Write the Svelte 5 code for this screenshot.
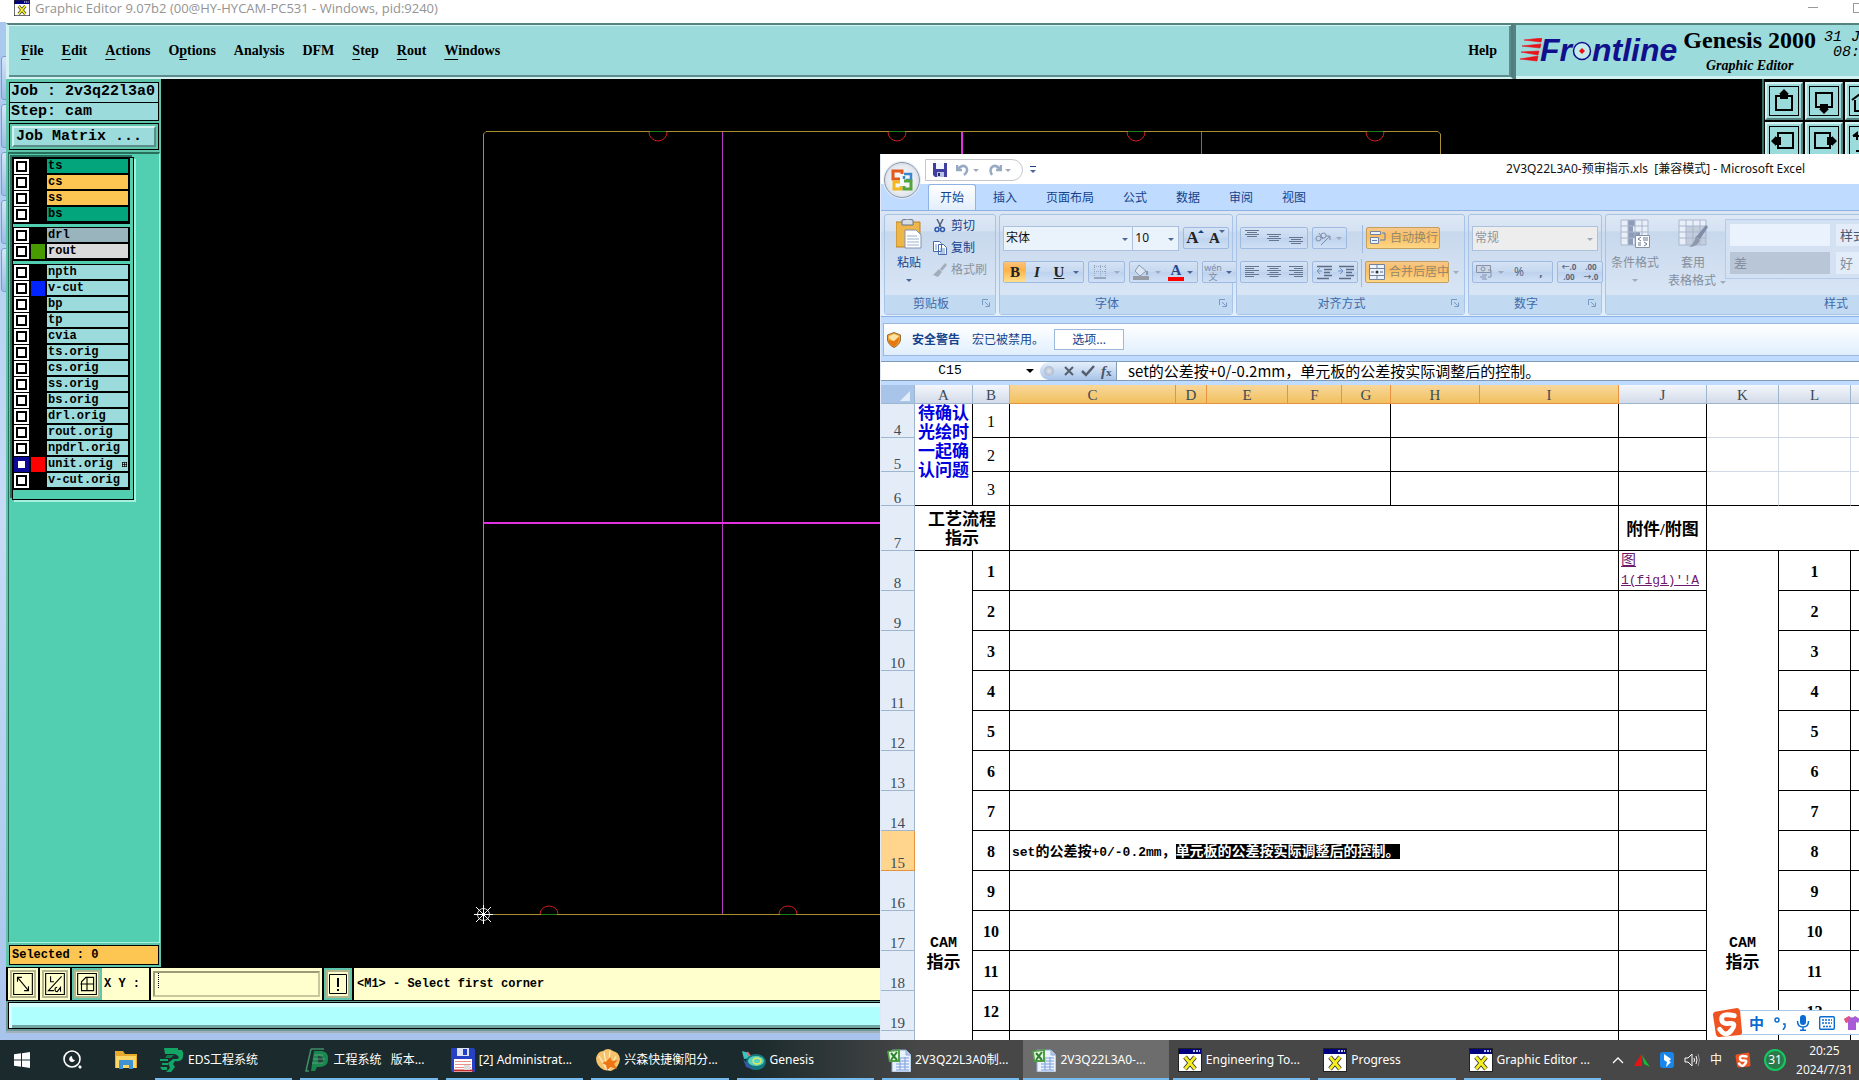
<script lang="ts">
	// Desktop with a CAM graphic editor behind an Excel window, plus the taskbar.

	type Layer = { name: string; bg?: string; swatch?: string; active?: boolean };

	const menus = [
		['', 'F', 'ile'],
		['', 'E', 'dit'],
		['', 'A', 'ctions'],
		['O', 'p', 'tions'],
		['Analysis', '', ''],
		['DFM', '', ''],
		['', 'S', 'tep'],
		['', 'R', 'out'],
		['', 'W', 'indows']
	];

	const layerGroups: Layer[][] = [
		[
			{ name: 'ts', bg: 'green' },
			{ name: 'cs', bg: 'amber' },
			{ name: 'ss', bg: 'amber' },
			{ name: 'bs', bg: 'green' }
		],
		[
			{ name: 'drl', bg: 'slate' },
			{ name: 'rout', bg: 'silver', swatch: '#479a00' }
		],
		[
			{ name: 'npth' },
			{ name: 'v-cut', swatch: '#0024ff' },
			{ name: 'bp' },
			{ name: 'tp' },
			{ name: 'cvia' },
			{ name: 'ts.orig' },
			{ name: 'cs.orig' },
			{ name: 'ss.orig' },
			{ name: 'bs.orig' },
			{ name: 'drl.orig' },
			{ name: 'rout.orig' },
			{ name: 'npdrl.orig' },
			{ name: 'unit.orig', swatch: '#ff0000', active: true },
			{ name: 'v-cut.orig' }
		]
	];

	const tools = ['up', 'down', 'home', 'left', 'right', 'back'];
	const topNotches = [658, 897, 1136, 1375];
	const bottomNotches = [549, 788];

	const tabs = ['开始', '插入', '页面布局', '公式', '数据', '审阅', '视图'];

	const columns = [
		{ id: 'A', width: 58 },
		{ id: 'B', width: 37 },
		{ id: 'C', width: 166, sel: true },
		{ id: 'D', width: 31, sel: true },
		{ id: 'E', width: 81, sel: true },
		{ id: 'F', width: 54, sel: true },
		{ id: 'G', width: 49, sel: true },
		{ id: 'H', width: 89, sel: true },
		{ id: 'I', width: 139, sel: true },
		{ id: 'J', width: 88 },
		{ id: 'K', width: 72 },
		{ id: 'L', width: 72 },
		{ id: 'M', width: 72 }
	];
	const camRows = Array.from({ length: 20 }, (_, i) => i + 1);

	const tasks = [
		{ icon: 'eds', label: 'EDS工程系统' },
		{ icon: 'ps', label: '工程系统   版本...' },
		{ icon: 'disk', label: '[2] Administrat...' },
		{ icon: 'shell', label: '兴森快捷衡阳分...' },
		{ icon: 'genesis', label: 'Genesis' },
		{ icon: 'xls', label: '2V3Q22L3A0制...' },
		{ icon: 'xls', label: '2V3Q22L3A0-...', active: true },
		{ icon: 'x', label: 'Engineering To...' },
		{ icon: 'x', label: 'Progress' },
		{ icon: 'x', label: 'Graphic Editor ...' }
	];

	let command = $state('');
	let formula = $state('set的公差按+0/-0.2mm，单元板的公差按实际调整后的控制。');
</script>

{#snippet xicon()}
	<svg viewBox="0 0 24 24">
		<path d="M0 0H24V24H0Z" fill="#222" />
		<path d="M1 6H23V23H1Z" fill="#fff" />
		<path d="M1 1H23V6H1Z" fill="#000080" />
		<path d="M15 3h2m1 0h2m1 0h1" stroke="#fff" stroke-width="1.5" />
		<path d="M7 9L17 21M17 9L7 21" stroke="#333" stroke-width="4.5" />
		<path d="M7 9L17 21M17 9L7 21" stroke="#f4ee20" stroke-width="2.8" />
	</svg>
{/snippet}

{#snippet lines(widths: number[], align: string, top = 4)}
	<svg viewBox="0 0 22 20" width="22" height="20">
		{#each widths as w, i}
			<path
				d="M{align === 'left' ? 4 : align === 'right' ? 18 - w : 11 - w / 2} {top + i * 2 + 0.5}h{w}"
				stroke="#66758f"
			/>
		{/each}
	</svg>
{/snippet}

{#snippet indent(flip: boolean)}
	<svg viewBox="0 0 22 20" width="22" height="20">
		<path d="M4 4.500h15M11 7.500h8M11 10.500h6M11 13.500h8M4 16.500h12" stroke="#5d6d88" stroke-width="1.500" />
		<path d={flip ? 'M3 9h4M5 6l3 3-3 3' : 'M9 9H4M7 6L4 9l3 3'} stroke="#6f90c4" fill="none" />
	</svg>
{/snippet}

{#snippet launcher()}
	<svg class="launcher" viewBox="0 0 8 8" width="8" height="8">
		<path d="M.5 6V.5H6M3 3l3.500 3.500M7.500 3.500v4h-4" stroke="#7797c4" fill="none" />
	</svg>
{/snippet}

{#snippet sogou()}
	<svg viewBox="0 0 32 32">
		<path d="M3 5L26 1q2 0 3 3l2 22q0 2-2 3L8 31q-3 0-4-3L1 8q0-2 2-3Z" fill="#ee5322" />
		<path
			d="M23 9Q10 6 10 12t8 5 2 7-12-1"
			stroke="#fff"
			stroke-width="5"
			fill="none"
			stroke-linecap="round"
		/>
	</svg>
{/snippet}

{#snippet taskIcon(name: string)}
	{#if name === 'x'}
		{@render xicon()}
	{:else if name === 'eds'}
		<svg viewBox="0 0 24 24">
			<path
				d="M4 0h14v2h4q2 3 1 7-1 5-8 4l-2 3 2 3-4 5H6l4-4-2-5 5-4h4q3-1 1-3-2-2-4-2H5Z M0 11h8v2H0ZM2 15h6v2H2ZM0 19h7v3H2Z"
				fill="#12a565"
			/>
			<path d="M7 7h7l-3 3H5Z" fill="#0b7e4b" />
		</svg>
	{:else if name === 'ps'}
		<svg viewBox="0 0 24 24">
			<path d="M6 1h13M6 1L1 23h3" fill="none" stroke="#3f8f67" stroke-width="1.500" />
			<path d="M9 3h8q7 1 6 9 0 6-8 7h-3l-2 4H6Z" fill="#19884f" />
			<path d="M13 8q5 0 5 4t-5 3Z" fill="#23443a" />
			<path d="M9 7h9M8 11h12M7 15h11" stroke="#70a78a" stroke-width=".8" />
		</svg>
	{:else if name === 'disk'}
		<svg viewBox="0 0 24 24">
			<path d="M1 0H23l1 2V24H1L0 22V1Z" fill="#2741c4" />
			<path d="M6 0H18V8H6Z" fill="#dce3f5" />
			<path d="M12 1h4v6h-4Z" fill="#2741c4" />
			<path d="M3 11H21V24H3Z" fill="#fff" />
			<path d="M4 13.500h16M4 16.500h16M4 19.500h16" stroke="#ee8f8f" />
			<path d="M2 22.500h20" stroke="#c02e2e" stroke-width="2" />
			<path d="M13 17h6v5h-6Z" fill="#ddd" />
		</svg>
	{:else if name === 'shell'}
		<svg viewBox="0 0 24 24">
			<path d="M8 22Q0 18 0 10q2-7 7-7 5-4 10 0 6 1 7 8-1 9-9 12Z" fill="#f6c26a" />
			<path d="M11 22L3 8M11 22L8 4M12 22l2-19M13 22l7-14" stroke="#fff0cf" stroke-width="1.200" />
			<path d="M14 9l2 4 6-1-4 4 3 5-6-2-4 3-1-5-4-2 5-2Z" fill="#ee7414" />
		</svg>
	{:else if name === 'genesis'}
		<svg viewBox="0 0 24 24">
			<path d="M0 3l7 2 2 5-7 1Z" fill="#39c6c0" />
			<ellipse cx="14" cy="14" rx="10" ry="8" fill="#15777c" />
			<ellipse cx="14" cy="13" rx="8" ry="5" fill="#5ad2c1" />
			<ellipse cx="15" cy="13" rx="4" ry="3" fill="none" stroke="#dfe85a" stroke-width="1.500" />
			<path d="M1 11l8 8 4 3-9-3Z" fill="#3557a8" />
			<path d="M5 4l3 4" stroke="#e56a6a" stroke-width="2" />
		</svg>
	{:else}
		<svg viewBox="0 0 24 24">
			<path d="M5 2H19l5 5V24H5Z" fill="#e9f1fc" stroke="#8ea9d2" />
			<path d="M19 2v5h5" fill="#b9cdea" stroke="#8ea9d2" />
			<path d="M14 10h8M14 13h8M9 16h13M9 19h13M9 22h13M13 9v13M18 9v13" stroke="#7c9edb" />
			<path d="M0 3L13 1V14L2 14Z" fill="#4f9f45" />
			<path d="M2 4L11 3V12L3 12Z" fill="#e8f6e2" />
			<path d="M4 5l6 7M10 4l-6 8" stroke="#2c8331" stroke-width="2" />
		</svg>
	{/if}
{/snippet}

<div class="screen">
	<main class="desktop">
		<div class="behind">
			{#each [0, 1, 2, 3, 4] as n (n)}<i></i>{/each}
		</div>

		<section class="genesis">
			<header class="g-title">
				<span class="g-app">{@render xicon()}</span>
				<span class="g-caption">Graphic Editor 9.07b2 (00@HY-HYCAM-PC531 - Windows, pid:9240)</span>
				<button class="win-btn" aria-label="Minimize"><i class="min"></i></button>
				<button class="win-btn" aria-label="Maximize"><i class="max"></i></button>
			</header>

			<div class="g-top">
				<nav class="g-menu">
					{#each menus as [pre, key, post]}
						<button>{pre}<span class="key">{key}</span>{post}</button>
					{/each}
					<button class="help">Help</button>
				</nav>
				<div class="g-brand">
					<div class="logo">
						<svg class="streaks" viewBox="0 0 22 24" width="22" height="24">
							<path
								d="M4 2L22 0l-1 4ZM2 8l19-2-1 4ZM1 14l18-1-1 4ZM0 21l18-3-1 5Z"
								fill="#e8141c"
								stroke="#e8141c"
								stroke-width=".6"
							/>
						</svg>
						<span>Fr</span>
						<svg class="target" viewBox="0 0 20 20" width="20" height="20">
							<circle cx="10" cy="10" r="8.500" fill="#c4ebeb" stroke="#10108c" stroke-width="1.500" />
							<path d="M10 7l3 3-3 3-3-3Z" fill="#ee1111" />
						</svg>
						<span>ntline</span>
					</div>
					<div class="product">
						<strong>Genesis 2000</strong>
						<em>Graphic Editor</em>
					</div>
					<div class="stamp"><span>31 J</span><span>08:</span></div>
				</div>
			</div>

			<div class="g-work">
				<aside class="g-side">
					<div class="job-info">
						<div>Job : 2v3q22l3a0</div>
						<div>Step: cam</div>
					</div>
					<div class="matrix"><button>Job Matrix ...</button></div>
					<div class="side-body">
						<div class="layers">
							{#each layerGroups as group}
								<div class="layer-group">
									{#each group as l (l.name)}
										<label class="layer">
											<input type="checkbox" checked={l.active} />
											<span class="swatch" style:background={l.swatch ?? '#000'}></span>
											<span class="lname {l.bg ?? ''}">
												{l.name}
												{#if l.active}
													<svg viewBox="0 0 5 5" width="5" height="5"><path d="M0 .5h5M0 2.500h5M0 4.500h5M.5 0v5M2.500 0v5M4.500 0v5" stroke="#000" stroke-width=".7" /></svg>
												{/if}
											</span>
										</label>
									{/each}
								</div>
							{/each}
						</div>
					</div>
					<div class="selected"><div>Selected : 0</div></div>
				</aside>

				<div class="g-canvas">
					<svg width="100%" height="100%">
						<g transform="translate(-161 -79)" fill="none">
							<path d="M486 131.500H1438L1440.500 134V914.500H483.500V134Z" stroke="#a8902e" />
							<path d="M722.500 132V914M1201.500 132V914" stroke="#b83cc0" />
							<path d="M962 132V914M484 523H1440" stroke="#e030e0" stroke-width="2" />
							{#each topNotches as x}
								<path d="M{x - 9} 132a9 9 0 0 0 18 0" stroke="#d01c1c" />
								<path d="M{x - 8} 131.500h16" stroke="#1d7a1d" />
							{/each}
							{#each bottomNotches as x}
								<path d="M{x - 9} 914a9 8 0 0 1 18 0" stroke="#d01c1c" />
								<path d="M{x - 8} 914.500h16" stroke="#1d7a1d" />
							{/each}
							<circle cx="483.500" cy="914.500" r="6" stroke="#ddd" />
							<path d="M474 914.500h19M483.500 905v19M476 907l15 15M491 907l-15 15" stroke="#fff" />
						</g>
					</svg>
				</div>

				<div class="g-tools">
					{#each tools as t (t)}
						<button aria-label={t}>
							<svg viewBox="0 0 28 28" width="28" height="28" fill="none" stroke="#000" stroke-width="2">
								{#if t === 'up'}
									<path d="M6 9H22V23H6Z" /><path d="M14 2l5 5h-1v5h-8V7H9Z" fill="#000" stroke="none" />
								{:else if t === 'down'}
									<path d="M6 6H22V20H6Z" /><path d="M14 27l5-5h-1v-5h-8v5H9Z" fill="#000" stroke="none" />
								{:else if t === 'left'}
									<path d="M8 6H23V21H8Z" /><path d="M1 14l5-5v1h5v8H6v1Z" fill="#000" stroke="none" />
								{:else if t === 'right'}
									<path d="M5 6H20V21H5Z" /><path d="M27 14l-5-5v1h-5v8h5v1Z" fill="#000" stroke="none" />
								{:else if t === 'home'}
									<path d="M2 13L14 4l12 9M5 13V24H23V13M10 24V15h6" />
								{:else}
									<path d="M3 9l4-3v7M3 9h8q6 3 3 12M6 24h8" />
								{/if}
							</svg>
						</button>
					{/each}
				</div>
			</div>

			<div class="g-command">
				<button class="cmd" aria-label="Snap"><svg viewBox="0 0 18 20" width="20" height="22" fill="none" stroke="#000"><path d="M.5.5h17v19H.5ZM4 4l10 12M4 8V4h4M14 12v4h-4" /></svg></button>
				<button class="cmd" aria-label="Angle"><svg viewBox="0 0 18 20" width="20" height="22" fill="none" stroke="#000"><path d="M.5.5h17v19H.5ZM15 3L3 16h5M5 3v5h3M11 13a2 2 0 1 0 0 4l3-4v4" /></svg></button>
				<button class="cmd on" aria-label="Grid"><svg viewBox="0 0 18 20" width="20" height="22" fill="none" stroke="#000"><path d="M.5.5h17v19H.5ZM4 16V8l4-4h7v12ZM9 4v12M3 10h12" /></svg></button>
				<label for="xy">X Y :</label>
				<div class="xy"><input id="xy" bind:value={command} /><span class="caret"></span></div>
				<button class="cmd on alert" aria-label="Alert"><svg viewBox="0 0 18 20" width="18" height="22" fill="none" stroke="#000"><path d="M.5.5h17v19H.5Z" /><path d="M9 4v9M9 15v2" stroke-width="2" /></svg></button>
				<output>&lt;M1&gt; - Select first corner</output>
			</div>
			<div class="g-status"><div></div></div>
		</section>

		<section class="excel">
			<header class="x-title">
				<div class="qat">
					<button aria-label="保存"><svg viewBox="0 0 14 14" width="14" height="14"><path d="M0 0H14V14H2L0 12Z" fill="#3f3fa0" /><path d="M3 0h8v6H3Z" fill="#f4f7ff" /><path d="M4 9h7v5H4Z" fill="#b9c2e4" /><path d="M5 10h2v3H5Z" fill="#222a66" /></svg></button>
					<button aria-label="撤消"><svg viewBox="0 0 14 14" width="14" height="14"><path d="M1 2v5h5M2 6q4-5 8-2 3 4-2 8" fill="none" stroke="#98a9c4" stroke-width="2.500" /></svg><i class="tri pale"></i></button>
					<button aria-label="恢复"><svg viewBox="0 0 14 14" width="14" height="14"><path d="M13 2v5H8M12 6Q8 1 4 4 1 7 4 12" fill="none" stroke="#98a9c4" stroke-width="2.500" /></svg><i class="tri pale"></i></button>
				</div>
				<button class="more" aria-label="自定义"><i class="tri"></i></button>
				<h1>2V3Q22L3A0-预审指示.xls  [兼容模式] - Microsoft Excel</h1>
			</header>
			<button class="orb" aria-label="Office">
				<svg viewBox="0 0 24 24" width="24" height="24" fill="none" stroke-width="3">
					<path d="M10 11H3V3h9v3" stroke="#e2591c" />
					<path d="M14 6h7v6h-5M14 8v3" stroke="#3b86d0" stroke-width="2.500" />
					<path d="M10 14H4v7h7v-3" stroke="#f4b81d" />
					<path d="M14 13h7v8h-7v-3" stroke="#55a53c" />
				</svg>
			</button>

			<nav class="x-tabs">
				{#each tabs as t, i (t)}
					<button class:current={i === 0}>{t}</button>
				{/each}
			</nav>

			<div class="ribbon">
				<div class="group clip">
					<div class="body">
						<button class="big paste">
							<svg viewBox="0 0 26 30" width="26" height="30">
								<path d="M0 3H24V28H0Z" fill="#eeb549" stroke="#b98225" />
								<path d="M6 1q6-2 11 0v5H6Z" fill="#d7dde6" stroke="#68758a" />
								<path d="M9 11h11l5 5v13H9Z" fill="#fff" stroke="#7d93b9" />
								<path d="M11 17h10M11 20h12M11 23h12M11 26h12" stroke="#9bb0d2" />
							</svg>
							<span>粘贴</span><i class="tri"></i>
						</button>
						<div class="clip-list">
							<button><svg viewBox="0 0 14 14" width="14" height="14" fill="none"><path d="M4 0l4 8M10 0L6 8" stroke="#55607a" stroke-width="1.500" /><circle cx="4" cy="10.500" r="2" stroke="#2f57a8" stroke-width="1.500" /><circle cx="9.500" cy="10.500" r="2" stroke="#2f57a8" stroke-width="1.500" /></svg>剪切</button>
							<button><svg viewBox="0 0 14 14" width="14" height="14"><path d="M.5.5h6l2 2v8h-8ZM5.500 3.500h5l3 3v7h-8Z" fill="#fff" stroke="#4569a9" /><path d="M7 8h5M7 10h5M7 12h5M2 4h2M2 6h2M2 8h2" stroke="#6b90d0" /></svg>复制</button>
							<button class="off"><svg viewBox="0 0 14 14" width="14" height="14"><path d="M12 0l2 2-5 6-2-2ZM6 6l3 3-4 5-5-2Z" fill="#a3acb9" /></svg>格式刷</button>
						</div>
					</div>
					<footer>剪贴板{@render launcher()}</footer>
				</div>

				<div class="group font">
					<div class="body rows">
						<div class="row">
							<div class="combo family"><select aria-label="字体"><option>宋体</option></select><i class="tri"></i></div>
							<div class="combo size"><select aria-label="字号"><option>10</option></select><i class="tri"></i></div>
							<div class="seg push"><button class="serif big-a" aria-label="增大字号">A<i class="tri up"></i></button><button class="serif small-a" aria-label="减小字号">A<i class="tri dn"></i></button></div>
						</div>
						<div class="row">
							<div class="seg"><button class="serif pressed">B</button><button class="serif it">I</button><button class="serif un">U</button><i class="tri"></i></div>
							<div class="seg"><button aria-label="边框"><svg viewBox="0 0 14 14" width="14" height="14"><path d="M1.500 0v12M7.500 0v12M12.500 0v12M1 1.500h12M1 6.500h12" stroke="#97a7bf" stroke-dasharray="1 1" /><path d="M1 13h12" stroke="#66758f" /></svg></button><i class="tri pale"></i></div>
							<div class="seg"><button aria-label="填充颜色"><svg viewBox="0 0 16 16" width="16" height="16"><path d="M6 1l7 6-6 5-5-5Z" fill="#dce6f3" stroke="#8898b0" /><path d="M14 7v4" stroke="#8898b0" stroke-width="2" /><path d="M0 12h16v4H0Z" fill="#969ca5" /></svg></button><i class="tri pale"></i><button class="serif red">A</button><i class="tri"></i></div>
							<div class="seg"><button class="wen" aria-label="拼音"><span>wén</span><span>文</span></button><i class="tri"></i></div>
						</div>
					</div>
					<footer>字体{@render launcher()}</footer>
				</div>

				<div class="group align">
					<div class="body rows">
						<div class="row">
							<div class="seg"><button aria-label="顶端对齐">{@render lines([14, 10, 14, 10], 'center', 2)}</button><button aria-label="垂直居中">{@render lines([14, 10, 14, 10], 'center', 6)}</button><button aria-label="底端对齐">{@render lines([14, 10, 14, 10], 'center', 9)}</button></div>
							<div class="seg"><button class="slant" aria-label="方向"><svg viewBox="0 0 18 18" width="18" height="18" fill="none" stroke="#7d8ca6"><circle cx="4.500" cy="9.500" r="2.500" /><path d="M5 4l4 6" /><circle cx="9.500" cy="6.500" r="2.500" /><path d="M7 16L16 7M16 11V7h-4" /></svg></button><i class="tri pale"></i></div>
							<button class="hot wrap"><svg viewBox="0 0 16 16" width="16" height="16"><path d="M.5 1.500h10v3H.5ZM.5 7.500h8v6H.5Z" fill="#eef3fb" stroke="#72839d" /><path d="M12 3h3v7h-5M2 10.500h5" stroke="#5b7ab0" fill="none" /></svg>自动换行</button>
						</div>
						<div class="row">
							<div class="seg"><button aria-label="左对齐">{@render lines([14, 9, 14, 9, 14, 9], 'left')}</button><button aria-label="居中">{@render lines([14, 9, 14, 9, 14, 9], 'center')}</button><button aria-label="右对齐">{@render lines([14, 9, 14, 9, 14, 9], 'right')}</button></div>
							<div class="seg"><button aria-label="减少缩进">{@render indent(false)}</button><button aria-label="增加缩进">{@render indent(true)}</button></div>
							<button class="hot merge"><svg viewBox="0 0 16 16" width="16" height="16"><path d="M.5.500h15v15H.5ZM.5 4.500h15M.5 11.500h15M8 0v4M8 12v4" fill="#eef3fb" stroke="#72839d" /><path d="M2 8h3M14 8h-3" stroke="#3f68ad" /><circle cx="8" cy="8" r="1.500" fill="#333" /></svg>合并后居中</button><i class="tri pale"></i>
						</div>
					</div>
					<footer>对齐方式{@render launcher()}</footer>
				</div>

				<div class="group number">
					<div class="body rows">
						<div class="row">
							<div class="combo general"><select aria-label="数字格式" disabled><option>常规</option></select><i class="tri pale"></i></div>
						</div>
						<div class="row">
							<div class="seg"><button aria-label="货币"><svg viewBox="0 0 16 16" width="16" height="16" fill="none" stroke="#8592a8"><path d="M.5 1.500h14v7H.5Z" fill="#cdd6e3" /><circle cx="7" cy="5" r="2" /><path d="M12 6h3v7h-3M6 11h5M4 13h6M6 15h5" /></svg></button><i class="tri pale"></i><button>%</button><button class="comma">,</button></div>
							<div class="seg push dec"><button><span>←.0</span><span>.00</span></button><button><span>.00</span><span>→.0</span></button></div>
						</div>
					</div>
					<footer>数字{@render launcher()}</footer>
				</div>

				<div class="group styles">
					<div class="body">
						<button class="big cond">
							<svg viewBox="0 0 30 30" width="30" height="30"><path d="M1 1H28V26H1Z" fill="#e9eff8" /><path d="M8 1h7v6H8ZM8 13h12v6H8ZM8 7h5v6H8ZM8 19h5v7H8Z" fill="#8d9cb8" /><path d="M1 1H28V26H1ZM8 1v25M15 1v25M22 1v25M1 7h27M1 13h27M1 19h27" stroke="#a9b7cd" fill="none" /><path d="M15.500 16.500h14v12h-14Z" fill="#fff" stroke="#8592a8" /><path d="M21 18l-3 2 3 2M18 24h3M18 26h3M23 19h5M23 21h5M24 23l3 2-3 2" stroke="#66758f" fill="none" /></svg>
							<span>条件格式</span><i class="tri pale"></i>
						</button>
						<button class="big tablefmt">
							<svg viewBox="0 0 30 30" width="30" height="30"><path d="M1 1H28V26H1Z" fill="#e9eff8" /><path d="M8 7h20v19H8Z" fill="#c3cddc" /><path d="M1 1H28V26H1ZM8 1v25M15 1v25M22 1v25M1 7h27M1 13h27M1 19h27" stroke="#a9b7cd" fill="none" /><path d="M28 6l2 2-8 12-4-2Z" fill="#7f8ea8" /><path d="M18 17l4 4q-2 7-11 7 5-3 7-11Z" fill="#8e99ac" /></svg>
							<span>套用</span><span>表格格式<i class="tri pale"></i></span>
						</button>
						<div class="gallery">
							<button class="plain" aria-label="样式预览"></button><button class="side">样式</button>
							<button class="bad">差</button><button class="side off">好</button>
						</div>
					</div>
					<footer>样式</footer>
				</div>
			</div>

			<div class="security">
				<svg viewBox="0 0 14 16" width="14" height="16"><path d="M7 .5L13.500 3v5q-1 5-6.500 7.500Q1.500 13 .5 8V3Z" fill="#f7a228" stroke="#8d6d39" /><path d="M7 2l5 2-5 6-5-4V4Z" fill="#fde2a6" /><path d="M7 15Q2 12 1 8l6 1 5-4v3q-1 4-5 7Z" fill="#e87810" /></svg>
				<strong>安全警告</strong>
				<span>宏已被禁用。</span>
				<button>选项...</button>
			</div>

			<div class="formula">
				<div class="namebox"><input aria-label="名称框" value="C15" /><i class="tri"></i></div>
				<div class="fx">
					<i class="knob"></i>
					<button aria-label="取消"><svg viewBox="0 0 12 12" width="12" height="12"><path d="M2 2l8 8M10 2l-8 8" stroke="#555e6c" stroke-width="2" /></svg></button>
					<button aria-label="输入"><svg viewBox="0 0 14 12" width="14" height="12"><path d="M1 6l4 4 8-9" stroke="#555e6c" stroke-width="2.500" fill="none" /></svg></button>
					<button class="fn"><em>f</em><small>x</small></button>
				</div>
				<input class="fx-text" aria-label="编辑栏" bind:value={formula} />
			</div>

			<div class="sheet">
				<table>
					<colgroup>
						<col class="hcol" />
						{#each columns as c (c.id)}<col style:width="{c.width}px" />{/each}
					</colgroup>
					<thead>
						<tr>
							<th class="corner" aria-label="全选"><i></i></th>
							{#each columns as c (c.id)}<th class:sel={c.sel}>{c.id}</th>{/each}
						</tr>
					</thead>
					<tbody>
						{#each [4, 5, 6] as r (r)}
							<tr class={r === 4 ? 'first' : 'note'}>
								<th>{r}</th>
								{#if r === 4}<td rowspan="3" class="pending">待确认光绘时一起确认问题</td>{/if}
								<td class="num">{r - 3}</td>
								<td colspan="5"></td>
								<td colspan="2"></td>
								<td></td>
								<td class="faint" class:edge={r === 6}></td>
								<td class="faint" class:edge={r === 6}></td>
								<td class="faint" class:edge={r === 6}></td>
							</tr>
						{/each}
						<tr class="flow">
							<th>7</th>
							<td colspan="2" class="head">工艺流程<br />指示</td>
							<td colspan="7"></td>
							<td class="head">附件/附图</td>
							<td colspan="3"></td>
						</tr>
						{#each camRows as n (n)}
							<tr class:editing={n === 8}>
								<th>{n + 7}</th>
								{#if n === 1}<td rowspan="20" class="head"><span class="cam">CAM</span><br />指示</td>{/if}
								<td class="num bold">{n}</td>
								<td colspan="7" class="text">
									{#if n === 8}<span class="latin">set</span>的公差按<span class="latin">+0/-0.2mm</span>，<mark>单元板的公差按实际调整后的控制。</mark>{/if}
								</td>
								<td class="link">{#if n === 1}<a href="#fig1">图<br /><span class="latin">1(fig1)'!A</span></a>{/if}</td>
								{#if n === 1}<td rowspan="20" class="head"><span class="cam">CAM</span><br />指示</td>{/if}
								<td class="num bold">{n}</td>
								<td></td>
							</tr>
						{/each}
					</tbody>
				</table>
			</div>
		</section>

		<div class="ime">
			<span class="ime-logo">{@render sogou()}</span>
			<div class="ime-bar">
				<b>中</b>
				<svg viewBox="0 0 14 14" width="14" height="14"><circle cx="4" cy="4" r="2" fill="none" stroke="#0a6cd0" stroke-width="1.500" /><path d="M10 8h2v3l-2 3" stroke="#0a6cd0" stroke-width="1.500" fill="none" /></svg>
				<svg viewBox="0 0 14 16" width="14" height="16"><rect x="4" y="0" width="6" height="10" rx="3" fill="#0a6cd0" /><path d="M1.500 6q0 6 5.500 6t5.500-6M7 12v3M4 15.200h6" stroke="#0a6cd0" stroke-width="1.500" fill="none" /></svg>
				<svg viewBox="0 0 16 14" width="16" height="14"><rect x=".7" y=".7" width="14.600" height="12.600" rx="1" fill="none" stroke="#0a6cd0" stroke-width="1.400" /><path d="M3 4h10M3 7h10M4 10.500h8" stroke="#0a6cd0" stroke-width="1.600" stroke-dasharray="2 1" /></svg>
				<svg viewBox="0 0 16 14" width="16" height="14"><path d="M5 0q3 3 6 0l5 3-2 4-2-1v8H4V6L2 7 0 3Z" fill="#a85cd8" /><path d="M5 0L0 3l2 4 2-1Z" fill="#ee5570" /></svg>
			</div>
		</div>
	</main>

	<footer class="taskbar">
		<div class="pins">
			<button aria-label="开始菜单"><svg viewBox="0 0 16 16" width="16" height="16" fill="#fff"><path d="M0 2.300l7-1v6.200H0ZM8 1.200L16 0v7.500H8ZM0 8.500h7v6.200l-7-1ZM8 8.500h8V16l-8-1.200Z" /></svg></button>
			<button aria-label="搜索"><svg viewBox="0 0 20 20" width="20" height="20" fill="none" stroke="#fff"><circle cx="9" cy="9" r="8" stroke-width="1.600" /><path d="M9 6a3 3 0 1 0 3 4q-3 0-3-4Z" fill="#fff" stroke="none" /><path d="M16 16l2 2" stroke-width="2.500" /></svg></button>
			<button aria-label="文件资源管理器"><svg viewBox="0 0 22 20" width="22" height="20"><path d="M0 1h8l2 3h12v14H0Z" fill="#e8a92c" /><path d="M1 6h20v12H1Z" fill="#fbd768" /><path d="M4 19v-8q0-1 1-1h12q1 0 1 1v8h-4v-4H8v4Z" fill="#3f93d4" /></svg></button>
		</div>
		<div class="tasks">
			{#each tasks as t}
				<button class:active={t.active}>{@render taskIcon(t.icon)}<span>{t.label}</span></button>
			{/each}
		</div>
		<div class="tray">
			<svg viewBox="0 0 12 12" width="12" height="12"><path d="M1 9l5-5 5 5" stroke="#fff" stroke-width="1.300" fill="none" /></svg>
			<svg viewBox="0 0 16 14" width="16" height="14"><path d="M8 0v13H0Z" fill="#e81212" /><path d="M8 2l8 12-6-3Z" fill="#18b830" /></svg>
			<svg viewBox="0 0 14 16" width="14" height="16"><rect width="14" height="16" rx="3" fill="#1787ee" /><path d="M4 2l7 5-2 2 2 1-5 5 1-5-3-2Z" fill="#fff" /></svg>
			<svg viewBox="0 0 16 14" width="16" height="14" fill="none" stroke="#fff"><path d="M1 5h3l4-4v12L4 9H1ZM10 5q1 2 0 4M12 3q2 4 0 8" /><path d="M14 1q3 6 0 12" stroke="#999" /></svg>
			<span class="lang">中</span>
			<span class="tray-sogou">{@render sogou()}</span>
			<span class="badge">31</span>
			<time><span>20:25</span><span>2024/7/31</span></time>
		</div>
	</footer>
</div>

<style>
	:global(body) {
		margin: 0;
	}
	.screen,
	.screen * {
		box-sizing: border-box;
	}
	.screen {
		display: flex;
		flex-direction: column;
		height: 100vh;
		overflow: hidden;
		font-family: 'Noto Sans', 'Noto Sans CJK SC', sans-serif;
		font-size: 12px;
		line-height: 16px;
	}
	button,
	input,
	select {
		font: inherit;
		color: inherit;
		padding: 0;
		margin: 0;
		border: 0;
		background: none;
		border-radius: 0;
	}
	input:focus {
		outline: none;
	}
	svg {
		display: block;
		flex: none;
	}
	.desktop {
		position: relative;
		flex: 1;
		min-height: 0;
		overflow: hidden;
		background: linear-gradient(#fff 22px, #a9c8ee 22px, #c7dbf6 50%, #a9c4ec);
	}
	.behind {
		display: flex;
		flex-direction: column;
		gap: 4px;
		width: 12px;
		padding: 56px 0 0 1px;
	}
	.behind i {
		height: 44px;
		border: 1px solid #7d9cc9;
		border-radius: 3px;
		background: linear-gradient(#d5e4f8, #9dbbe5);
	}

	/* graphic editor window */
	.genesis {
		position: absolute;
		inset: 0 0 7px 6px;
		display: flex;
		flex-direction: column;
		background: #000;
	}
	.g-title {
		display: flex;
		align-items: center;
		height: 23px;
		padding: 0 0 8px 8px;
		background: #fff;
		color: #949494;
		overflow: hidden;
	}
	.g-app {
		width: 16px;
		margin-right: 5px;
	}
	.g-caption {
		flex: 1;
		font: 13px/16px 'Open Sans', sans-serif;
	}
	.win-btn {
		display: grid;
		place-items: center;
		width: 45px;
		height: 15px;
	}
	.win-btn:last-child {
		margin-right: -21px;
	}
	.win-btn i {
		display: block;
		width: 10px;
		height: 10px;
		border: 1px solid #999;
	}
	.win-btn .min {
		height: 0;
		border-width: 1px 0 0;
	}
	.g-top {
		display: flex;
		height: 56px;
		background: #9cdbdb;
	}
	.g-menu {
		flex: 1;
		display: flex;
		align-items: center;
		gap: 18px;
		padding: 0 14px 0 13px;
		border: 2px solid;
		border-color: #55817f #4f7d7c #d3f3f3 #d3f3f3;
		box-shadow: inset 1px 1px #d3f3f3, inset -2px -2px #5c8d8c;
		font: bold 14px/16px 'Liberation Serif', serif;
	}
	.key {
		text-decoration: underline;
		text-underline-offset: 4px;
	}
	.help {
		margin-left: auto;
	}
	.g-brand {
		display: flex;
		width: 346px;
		padding: 5px 0 0 4px;
		border: solid #55817f;
		border-width: 2px 0 0 3px;
		box-shadow: inset 0 -3px #d3f3f3;
		overflow: hidden;
	}
	.logo {
		display: flex;
		align-items: center;
		height: 40px;
		font: italic bold 32px/40px 'Liberation Sans', sans-serif;
		color: #10108c;
	}
	.streaks {
		margin-right: -2px;
	}
	.target {
		margin-top: 2px;
	}
	.product {
		display: flex;
		flex-direction: column;
		align-items: center;
		margin-left: 6px;
		font-family: 'Liberation Serif', serif;
	}
	.product strong {
		font-size: 24px;
		line-height: 20px;
		white-space: nowrap;
	}
	.product em {
		margin-top: 6px;
		font-size: 14px;
		font-weight: bold;
		line-height: 20px;
	}
	.stamp {
		display: flex;
		flex-direction: column;
		align-items: flex-end;
		margin-left: 8px;
		font: italic 15px/15px 'Liberation Mono', monospace;
		white-space: nowrap;
	}
	.g-work {
		flex: 1;
		min-height: 0;
		display: flex;
	}
	.g-side {
		display: flex;
		flex-direction: column;
		width: 155px;
		padding: 3px 2px 2px 3px;
		background: #5fc5ab;
		font: bold 15px/18px 'Liberation Mono', monospace;
	}
	.job-info {
		border: 1px solid #000;
		background: #9cdbdb;
	}
	.job-info div {
		height: 19px;
		padding-left: 1px;
		white-space: nowrap;
	}
	.job-info div + div {
		border-top: 1px solid #000;
		height: 18px;
	}
	.matrix {
		margin-top: 2px;
		padding: 2px;
		border: 1px solid #000;
	}
	.matrix button {
		display: block;
		width: 100%;
		height: 21px;
		padding-left: 2px;
		text-align: left;
		background: #9cdbdb;
		border: 2px solid;
		border-color: #d3f3f3 #5c8d8c #5c8d8c #d3f3f3;
	}
	.side-body {
		flex: 1;
		margin: 2px -1px 2px -1px;
		padding: 3px;
		background: #52cfb0;
		border: solid #276e5b;
		border-width: 2px 0 0 1px;
		border-right: 1px solid #a6f0dd;
		border-bottom: 1px solid #a6f0dd;
	}
	.layers {
		display: flex;
		flex-direction: column;
		gap: 3px;
		width: 122px;
		padding: 0 3px 9px 0;
		border: 1px solid #000;
		box-shadow: 2px 2px #a6f0dd, -2px -2px #276e5b;
		font-size: 12px;
		line-height: 14px;
	}
	.layer-group {
		padding: 0 2px 2px 1px;
		background: #000;
	}
	.layer {
		display: flex;
		gap: 2px;
		height: 16px;
		padding-top: 1px;
	}
	.layer input {
		appearance: none;
		width: 15px;
		height: 15px;
		border: 2px solid #fff;
		box-shadow: inset 0 0 0 2px #000;
		background: #fff;
	}
	.layer input:checked {
		border: 4px solid #0a0a96;
		box-shadow: none;
	}
	.swatch {
		width: 14px;
		height: 15px;
	}
	.lname {
		flex: 1;
		display: flex;
		align-items: center;
		justify-content: space-between;
		height: 14px;
		padding: 0 1px;
		background: #9cdbdb;
	}
	.green {
		background: #03a57c;
	}
	.amber {
		background: #fdc551;
	}
	.slate {
		background: #9ab4be;
	}
	.silver {
		background: #dadada;
	}
	.selected div {
		height: 20px;
		padding-left: 2px;
		border: 1px solid #000;
		background: #fdc551;
		font-size: 12px;
	}
	.g-canvas {
		flex: 1;
		min-width: 0;
		overflow: hidden;
	}
	.g-tools {
		display: grid;
		grid-template-columns: repeat(3, 38px);
		grid-auto-rows: 38px;
		gap: 2px;
		width: 97px;
		padding: 3px 0 0 1px;
		overflow: hidden;
		border-left: 2px solid #2f6f62;
	}
	.g-tools button {
		display: grid;
		place-items: center;
		background: #9cdbdb;
		border: 2px solid;
		border-color: #d3f3f3 #55817f #55817f #d3f3f3;
		outline: 1px solid #000;
		outline-offset: -5px;
	}
	.g-command {
		display: flex;
		gap: 2px;
		height: 34px;
		padding: 1px 0 1px 2px;
		background: #000;
		font: bold 12px/16px 'Liberation Mono', monospace;
	}
	.cmd {
		display: grid;
		place-items: center;
		width: 30px;
		background: #ffffce;
		border: 2px solid #ffffce;
		box-shadow: inset 0 0 0 2px #b5b58e;
	}
	.cmd.on {
		border-color: #5fc5ab;
	}
	.cmd.alert {
		width: 28px;
	}
	.g-command label {
		width: 47px;
		margin-left: -2px;
		padding: 8px 0 0 2px;
		background: #ffffce;
		white-space: nowrap;
	}
	.xy {
		position: relative;
		width: 171px;
		padding: 3px 2px;
		background: #ffffce;
	}
	.xy input {
		width: 100%;
		height: 100%;
		padding-left: 4px;
		border: 2px solid;
		border-color: #9b9b78 #c8c8a0 #c8c8a0 #9b9b78;
	}
	.caret {
		position: absolute;
		left: 7px;
		top: 5px;
		height: 15px;
		border-left: 1px dotted #000;
	}
	.g-command output {
		flex: 1;
		padding: 8px 3px;
		background: #ffffce;
	}
	.g-status {
		height: 32px;
		padding: 1px 0 2px 2px;
		background: #6a9a98;
		border-bottom: 2px solid #9fb0b8;
	}
	.g-status div {
		height: 27px;
		border: solid #000;
		border-width: 1px 0 1px 1px;
		background: #b0ffff;
		box-shadow: inset 3px 4px #d5ffff, inset 0 -3px #74a5a5;
	}

	/* excel window */
	.excel {
		position: absolute;
		inset: 154px 0 0 880px;
		display: flex;
		flex-direction: column;
		overflow: hidden;
		background: #bfdbff;
		border-left: 1px solid #dfe9f5;
		color: #15428b;
	}
	.x-title {
		display: flex;
		align-items: center;
		height: 30px;
		padding: 0 54px 0 44px;
		background: #fff;
		flex: none;
	}
	.x-title h1 {
		margin: 0 0 0 auto;
		font-size: 12px;
		font-weight: normal;
		color: #111;
		white-space: pre;
	}
	.qat {
		display: flex;
		align-items: center;
		gap: 9px;
		width: 98px;
		height: 22px;
		margin-top: 2px;
		padding-left: 7px;
		border: 1px solid #c3c7cc;
		border-radius: 0 11px 11px 0;
	}
	.qat button {
		display: flex;
		align-items: center;
		gap: 3px;
	}
	.tri {
		display: block;
		flex: none;
		width: 0;
		border: solid transparent;
		border-width: 3px 3px 0;
		border-top-color: #4a6795;
	}
	.tri.pale {
		border-top-color: #a0aab8;
	}
	.more {
		margin-left: 7px;
		padding-top: 3px;
		border-top: 1px solid #15428b;
	}
	.orb {
		position: absolute;
		left: 3px;
		top: 8px;
		display: grid;
		place-items: center;
		width: 36px;
		height: 36px;
		border: 1px solid #8d99ab;
		border-radius: 50%;
		background: radial-gradient(#fff, #e6e9ef 60%, #b9c3d3);
		box-shadow: 0 0 0 1px #e7edf5;
	}
	.x-tabs {
		display: flex;
		flex: none;
		height: 26px;
		padding-left: 47px;
		gap: 5px;
	}
	.x-tabs button {
		height: 26px;
		padding: 1px 12px 0;
	}
	.x-tabs .current {
		border: solid #8db2e3;
		border-width: 1px 1px 0;
		border-radius: 3px 3px 0 0;
		background: linear-gradient(#fff, #e2eefb);
		padding: 0 11px;
	}
	.ribbon {
		display: flex;
		gap: 3px;
		flex: none;
		width: max-content;
		min-width: 100%;
		padding: 3px 3px 1px;
		border: solid #8db2e3;
		border-width: 1px 0;
		background: linear-gradient(#dbe6f4, #d0dff2 20%, #c9daf0 20%, #e3f0fc);
	}
	.group {
		display: flex;
		flex-direction: column;
		height: 101px;
		border: 1px solid #a9c3e6;
		border-radius: 3px;
		background: linear-gradient(#dee8f5, #d5e2f2 16%, #c8d8ec 17%, #dce9f8);
	}
	.group footer {
		position: relative;
		height: 19px;
		padding-right: 18px;
		background: #c1d9f1;
		color: #3e6aaa;
		text-align: center;
		line-height: 18px;
	}
	.group.styles footer {
		padding: 0;
	}
	.launcher {
		position: absolute;
		right: 5px;
		top: 4px;
	}
	.body {
		flex: 1;
		display: flex;
	}
	.rows {
		flex-direction: column;
		gap: 10px;
		padding: 11px 3px 0;
	}
	.row {
		display: flex;
		align-items: center;
		gap: 4px;
		height: 24px;
	}
	.clip {
		width: 112px;
	}
	.font {
		width: 234px;
	}
	.align {
		width: 229px;
	}
	.number {
		width: 134px;
	}
	.styles {
		width: 462px;
	}
	.big {
		display: flex;
		flex-direction: column;
		align-items: center;
		padding-top: 4px;
		white-space: nowrap;
	}
	.big span {
		margin-top: 6px;
	}
	.big .tri {
		margin-top: 8px;
	}
	.paste {
		width: 48px;
	}
	.clip-list {
		display: flex;
		flex-direction: column;
		gap: 6px;
		padding-top: 3px;
	}
	.clip-list button {
		display: flex;
		align-items: center;
		gap: 4px;
		white-space: nowrap;
	}
	.off {
		color: #8d949e;
	}
	.combo {
		position: relative;
		height: 25px;
		border: 1px solid #abc1de;
		background: #eaf2fb;
		color: #111;
	}
	.combo select {
		appearance: none;
		width: 100%;
		height: 100%;
		padding-left: 2px;
		opacity: 1;
	}
	.combo .tri {
		position: absolute;
		right: 4px;
		top: 11px;
	}
	.combo.family {
		width: 131px;
	}
	.combo.size {
		width: 47px;
		margin-left: -5px;
	}
	.combo.general {
		width: 128px;
		background: #ededed;
		color: #8d949e;
	}
	.seg {
		display: flex;
		align-items: center;
		height: 22px;
		border: 1px solid #9ebae1;
		border-radius: 2px;
		background: linear-gradient(#d5e3f4, #c5d8f0 50%, #bdd2ee 50%, #cfe0f5);
		color: #5a6880;
	}
	.seg button {
		display: grid;
		place-items: center;
		width: 22px;
		height: 20px;
	}
	.seg .tri {
		margin: 0 4px 0 3px;
	}
	.push {
		margin-left: auto;
	}
	.serif {
		font: bold 15px/18px 'Liberation Serif', serif;
		color: #222;
	}
	.big-a {
		font-size: 17px;
	}
	.seg .big-a,
	.seg .small-a {
		display: flex;
		justify-content: center;
	}
	.seg .tri.up,
	.seg .tri.dn {
		align-self: flex-start;
		margin: 2px 0 0 -1px;
		border-width: 3px 3px 0;
	}
	.seg .tri.up {
		border-width: 0 3px 3px;
		border-color: transparent transparent #15428b;
	}
	.it {
		font-style: italic;
	}
	.un {
		text-decoration: underline;
	}
	.seg .red {
		height: 18px;
		width: 16px;
		margin-left: 3px;
		border-bottom: 4px solid #f00;
		color: #29488c;
		line-height: 14px;
	}
	.pressed {
		background: linear-gradient(#fbc37c, #fdb247 40%, #ffe08c);
	}
	.seg .wen {
		display: flex;
		flex-direction: column;
		align-items: center;
		justify-content: center;
		width: 20px;
		font-size: 9px;
		line-height: 9px;
		color: #7d8ca6;
	}
	.seg .slant {
		width: 20px;
	}
	.hot {
		position: relative;
		display: flex;
		align-items: center;
		gap: 4px;
		width: 84px;
		height: 22px;
		padding: 0 0 0 3px;
		border: 1px solid #c5a05c;
		border-radius: 2px;
		background: linear-gradient(#f6c88b, #fabd62 40%, #fdd886);
		color: #94896f;
		margin-left: 3px;
		white-space: nowrap;
	}
	.hot::before {
		content: '';
		position: absolute;
		left: -5px;
		top: -3px;
		height: 28px;
		border-left: 1px solid #9ebae1;
	}
	.wrap {
		width: 74px;
		margin-left: 15px;
	}
	.comma {
		font-weight: bold;
	}
	.seg.dec button {
		font-size: 8px;
		line-height: 8px;
		font-weight: bold;
	}
	.styles .off,
	.cond,
	.tablefmt {
		color: #858f9e;
	}
	.cond {
		width: 58px;
	}
	.tablefmt {
		width: 58px;
	}
	.tablefmt span + span {
		display: flex;
		gap: 4px;
		margin: 2px 0 0 8px;
	}
	.gallery {
		display: grid;
		grid-template-columns: 100px 100px;
		gap: 6px;
		height: 60px;
		margin: 4px 0 0 3px;
		padding: 4px;
		width: 320px;
		border: 1px solid #b3cae8;
		background: #d3e1f3;
		color: #4a5a72;
		font-size: 13px;
	}
	.gallery button {
		padding-left: 4px;
		text-align: left;
	}
	.plain {
		background: #eaf3fd;
	}
	.bad {
		background: #b9c6d8;
		color: #858f9e;
	}
	.side {
		background: #e3edf9;
	}
	.security {
		display: flex;
		align-items: center;
		flex: none;
		height: 33px;
		margin: 6px 0 5px 2px;
		padding-left: 3px;
		border: solid #9db8da;
		border-width: 1px 0 1px 1px;
		background: linear-gradient(#fff, #e0effd);
	}
	.security strong {
		margin: 0 12px 0 11px;
	}
	.security button {
		width: 70px;
		height: 21px;
		margin-left: 10px;
		border: 1px solid #9db8da;
		background: #fff;
	}
	.formula {
		display: flex;
		flex: none;
		height: 20px;
		border: solid #7f9db9;
		border-width: 1px 0;
		background: #fff;
		color: #000;
	}
	.namebox {
		display: flex;
		align-items: center;
		width: 159px;
	}
	.namebox input {
		width: 138px;
		margin-right: 7px;
		text-align: center;
		font: 13px/18px 'Liberation Mono', monospace;
	}
	.namebox .tri {
		border-width: 4px 4px 0;
		border-top-color: #000;
	}
	.fx {
		display: flex;
		align-items: center;
		gap: 6px;
		width: 77px;
		padding-left: 4px;
		border-radius: 9px 0 0 9px;
		border-right: 1px solid #7f9db9;
		background: linear-gradient(#e5effb, #a9c4e8);
	}
	.knob {
		width: 10px;
		height: 10px;
		margin-right: 3px;
		border-radius: 50%;
		background: radial-gradient(#dfe5ee, #9aaac2);
	}
	.fn {
		font: bold 15px/16px 'Liberation Serif', serif;
		color: #4a5568;
	}
	.fn small {
		font-size: 11px;
	}
	.fx-text {
		flex: 1;
		min-width: 0;
		padding-left: 11px;
		font: 15px/18px 'Noto Sans CJK SC', sans-serif;
	}
	.sheet {
		flex: 1;
		min-height: 0;
		margin-top: 4px;
		overflow: hidden;
		background: #fff;
		font-family: 'Liberation Serif', 'Noto Sans CJK SC', serif;
		color: #000;
	}
	table {
		width: 1042px;
		table-layout: fixed;
		border-collapse: separate;
		border-spacing: 0;
	}
	.hcol {
		width: 34px;
	}
	th {
		padding: 0;
		border: solid #9eb6ce;
		border-width: 0 1px 1px 0;
		font-size: 15px;
		font-weight: normal;
		color: #3d4a57;
	}
	thead th {
		height: 19px;
		padding-top: 2px;
		line-height: 16px;
		background: linear-gradient(#f4f7fb, #d3dbe9);
	}
	thead .sel {
		border-color: #e8913f;
		background: linear-gradient(#f8d79b, #f1c15f);
	}
	thead .corner {
		background: #a9c4e9;
	}
	.corner i {
		display: block;
		width: 0;
		margin: 2px 4px 0 auto;
		border: solid transparent;
		border-width: 0 0 10px 10px;
		border-bottom-color: #e4ecf7;
	}
	tbody th {
		vertical-align: bottom;
		line-height: 14px;
		background: #e4ecf7;
	}
	.editing th {
		background: #ffd58d;
		border-color: #e8913f;
	}
	tbody tr {
		height: 40px;
	}
	tbody .first,
	tbody .note {
		height: 34px;
	}
	tbody .flow {
		height: 45px;
	}
	td {
		padding: 0;
		border: solid #000;
		border-width: 0 1px 1px 0;
		overflow: hidden;
	}
	.faint {
		border-color: #d0d7e5;
	}
	.faint.edge {
		border-bottom-color: #000;
	}
	.num {
		padding-top: 2px;
		text-align: center;
		font-size: 16px;
	}
	.bold {
		font-weight: bold;
	}
	.head {
		padding-top: 2px;
		text-align: center;
		font-size: 17px;
		line-height: 19px;
		font-weight: bold;
	}
	.cam {
		font: bold 15px/19px 'Liberation Mono', monospace;
	}
	.pending {
		padding: 0 3px;
		vertical-align: top;
		font-size: 17px;
		line-height: 19px;
		font-weight: bold;
		color: #0000e0;
	}
	.text {
		padding: 3px 0 0 2px;
		font-size: 14px;
		line-height: 16px;
		font-weight: bold;
		white-space: nowrap;
	}
	.latin {
		font-family: 'Liberation Mono', monospace;
		font-size: 13px;
	}
	mark {
		background: #000;
		color: #fff;
	}
	.link {
		padding-left: 2px;
		font-size: 15px;
		line-height: 19px;
	}
	.link a {
		color: #6d1a6d;
	}

	/* input method bar floating over the sheet */
	.ime {
		position: absolute;
		right: 0;
		bottom: 2px;
		display: flex;
		align-items: center;
		width: 147px;
		overflow: hidden;
	}
	.ime-logo {
		position: relative;
		flex: none;
		width: 31px;
	}
	.ime-bar {
		flex: none;
		display: flex;
		align-items: center;
		gap: 9px;
		width: 140px;
		height: 25px;
		margin-left: -12px;
		padding-left: 18px;
		border: solid #a9c8e6;
		border-width: 1px 0;
		background: #fff;
		color: #0a6cd0;
		font-size: 15px;
	}

	.taskbar {
		display: flex;
		height: 40px;
		flex: none;
		background: linear-gradient(90deg, #1b2a2c 750px, #474747 920px);
		color: #fff;
	}
	.pins {
		display: flex;
		align-items: center;
		justify-content: space-between;
		width: 151px;
		padding: 0 14px;
	}
	.tasks {
		flex: 1;
		display: grid;
		grid-template-columns: repeat(10, 1fr);
	}
	.tasks button {
		position: relative;
		display: flex;
		align-items: center;
		gap: 4px;
		min-width: 0;
		padding-left: 9px;
		white-space: pre;
	}
	.tasks button::after {
		content: '';
		position: absolute;
		inset: auto 4px 0;
		height: 2px;
		background: #76b9ed;
	}
	.tasks svg {
		width: 24px;
		height: 24px;
	}
	.tasks .active {
		background: #6d6d6d;
	}
	.tasks .active::after {
		inset: auto 0 0;
	}
	.tray {
		display: flex;
		align-items: center;
		gap: 10px;
		width: 254px;
		padding-left: 7px;
	}
	.lang {
		font-size: 12px;
	}
	.tray-sogou {
		width: 16px;
		margin: 0 3px;
	}
	.badge {
		width: 22px;
		height: 22px;
		border: 2px solid #16c860;
		border-radius: 50%;
		background: #2c7a4c;
		line-height: 18px;
		text-align: center;
	}
	time {
		display: flex;
		flex-direction: column;
		align-items: center;
		gap: 3px;
		font-family: 'Open Sans', sans-serif;
	}
</style>
